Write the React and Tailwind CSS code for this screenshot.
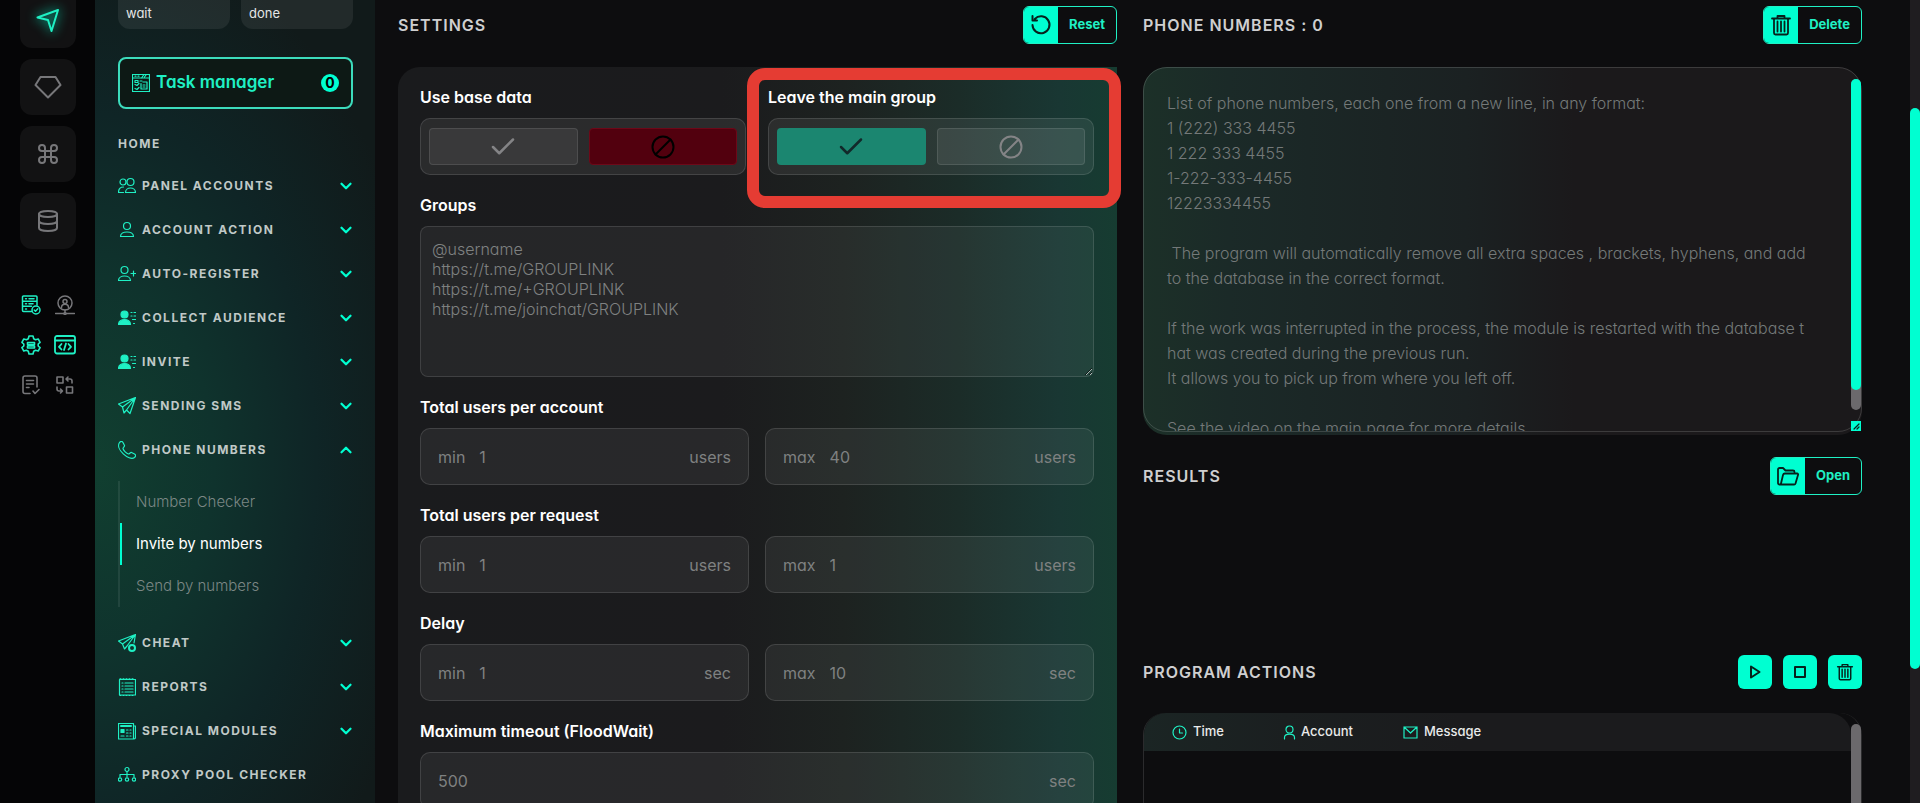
import React from 'react';
import { Check, ChevronDown, ChevronUp, Command, Database } from 'lucide-react';

const Svg = ({ children, size = 18, box = 18, width = 1.2, className = '' }) => (
  <svg
    width={size}
    height={size}
    viewBox={`0 0 ${box} ${box}`}
    fill="none"
    stroke="currentColor"
    strokeWidth={width}
    strokeLinecap="round"
    strokeLinejoin="round"
    className={`shrink-0 ${className}`}
    aria-hidden="true"
  >
    {children}
  </svg>
);

/* Rail icons */
const NavArrow = () => (
  <Svg size={24} box={24} width={2} className="drop-shadow-[0_0_6px_#00ffd1]">
    <path d="M22 2 1.5 9.5 12 12l3.500 11Z" />
  </Svg>
);

const Diamond = () => (
  <Svg size={28} box={28} width={2}>
    <path d="M6.500 4h15L26.500 12 14 24.500 1.500 12Z" />
  </Svg>
);

const ServerCheck = () => (
  <Svg size={20} box={20} width={1.5}>
    <path d="M10.500 16.500H2.500a1 1 0 0 1-1-1V2a1 1 0 0 1 1-1H15a1 1 0 0 1 1 1v8M1.500 6.200H16M1.500 11.200h9M4.500 3.700h1M8 3.700h5M4.500 8.700h1M8 8.700h4M4.500 14h1" />
    <circle cx="15" cy="15" r="4" />
    <path d="m13.200 15 1.300 1.300 2.300-2.500" />
  </Svg>
);

const UserNetwork = () => (
  <Svg size={20} box={20} width={1.5}>
    <circle cx="10" cy="8" r="7" />
    <circle cx="10" cy="6.500" r="2" />
    <path d="M6.500 12.500c0-4.500 7-4.500 7 0M10 15v2M.500 18.500h8M11.500 18.500h8" />
    <circle cx="10" cy="18.500" r="1" />
  </Svg>
);

const GearServer = () => (
  <Svg size={20} box={20} width={1.6}>
    <path d="M8 1h4l.700 2.700 1.800 1 2.700-.700 1.900 3.300L17.200 9v2l1.900 1.700-1.900 3.300-2.700-.700-1.800 1L12 19H8l-.700-2.700-1.800-1-2.700.700-1.900-3.300L2.800 11V9L.900 7.300 2.800 4l2.700.700 1.800-1Z" />
    <path d="M6.500 7.500h7v2h-7zM6.500 11h7v2h-7z" />
  </Svg>
);

const CodeWindow = () => (
  <Svg size={22} box={22} width={1.8}>
    <rect x="1" y="2" width="20" height="17.500" rx="2" />
    <path d="M1 6.500h20M7.500 10 5 12.800l2.500 2.700M14.500 10l2.500 2.800-2.500 2.700M12 9.500l-2 6.500" />
  </Svg>
);

const DocCheck = () => (
  <Svg size={20} box={20} width={1.6}>
    <path d="M9 18.500H4a2 2 0 0 1-2-2V3a2 2 0 0 1 2-2h10a2 2 0 0 1 2 2v9M5.500 5.500h7M5.500 9h7M5.500 12.500H8M12 16l2 2.500 4-4" />
  </Svg>
);

const Swap = () => (
  <Svg size={20} box={20} width={1.6}>
    <path d="M2 2h6v6H2zM11.500 12h6v6h-6zM11.500 4H15a2 2 0 0 1 2 2v2M13 2l-2 2 2 2M2 12v2a2 2 0 0 0 2 2h3M5.500 14l2 2-2 2" />
  </Svg>
);

/* Menu icons */
const TaskIcon = () => (
  <Svg>
    <path d="M.500.500h17v17H.500zM.500 4h17M3 2.200h1M6 2.200h1M9.500 4 12 .500M12.500 3 14 1M3 6.500h3v2H3zM3 10.500l2 1 2-2M3 14.500l2 1 2-2M8 7h2M9 9.500V15h6V8h-4M11 11h2M11 13h2" />
  </Svg>
);

const UsersIcon = () => (
  <Svg>
    <circle cx="5" cy="5" r="3" />
    <circle cx="12.500" cy="5" r="3.500" />
    <path d="M.500 15.500c0-4 2-5.500 5-5.500M.500 15.500h5M7.500 15.500c0-6 10-6 10 0Z" />
  </Svg>
);

const UserIcon = () => (
  <Svg>
    <circle cx="9" cy="5" r="3.500" />
    <path d="M2.500 15.500c0-6 13-6 13 0Z" />
  </Svg>
);

const UserPlusIcon = () => (
  <Svg>
    <circle cx="6.500" cy="5" r="3.500" />
    <path d="M.500 15.500c0-6 12-6 12 0ZM15.500 6v5M13 8.500h5" />
  </Svg>
);

const AudienceIcon = () => (
  <Svg>
    <circle cx="6.500" cy="5.500" r="3.500" fill="currentColor" />
    <path d="M.500 15.500c0-6.500 12-6.500 12 0Z" fill="currentColor" />
    <path d="M13 3.500h1M16 3.500h2M13 7h1M16 7h2M14.500 10.500h3M15.500 14.500h1" />
  </Svg>
);

const SendIcon = () => (
  <Svg>
    <path d="M17.500.500.500 7l4 3 1.500 6 2.500-3 3.500 3.500ZM17.500.500 4.500 10M17.500.500 8.500 13" />
  </Svg>
);

const PhoneIcon = () => (
  <Svg>
    <path d="M1.500 1.500C3-.200 4 0 5 1.500l1.500 3c.500 1-1.500 2-1.500 3C5.500 9.500 8.500 12.500 10.500 13c1 0 2-2 3-1.500l3 1.500c1.500 1 1.500 2 0 3.500C11 20.500-3 8 1.500 1.500Z" />
  </Svg>
);

const CheatIcon = () => (
  <Svg>
    <path d="M17.500.500.500 7l4 3 2 5 2.500-3M17.500.500 4.500 10M17.500.500 9 12M17.500.500 16 9" />
    <circle cx="14" cy="14" r="3" strokeWidth="2" />
  </Svg>
);

const ReportIcon = () => (
  <Svg>
    <path d="M1.500 1.500h16v15.500h-16z" />
    <path d="M2 .800h15M2 17.500h15" strokeDasharray="1 2" />
    <path d="M4 5h1M7 5h8M4 8h1M7 8h8M4 11h1M7 11h8M4 14h1M7 14h8" />
  </Svg>
);

const ModuleIcon = () => (
  <Svg>
    <path d="M.500 1.500h15v15.500H.500zM15.500 4h2v11.500c0 1-1 1.500-2 1.500" />
    <path d="M3 4h10" strokeWidth="2" />
    <path d="M3 7.500h3v3H3z" fill="currentColor" />
    <path d="M8.500 8h1.500M12 8h1M8.500 11h1.500M12 11h1M3 14h3M8.500 14h1.500M12 14h1" />
  </Svg>
);

const TreeIcon = () => (
  <Svg>
    <path d="M9 5.500v3M2 11V8.500h14V11M9 8.500V11" />
    <circle cx="9" cy="3.500" r="2" />
    <circle cx="2" cy="13.500" r="1.700" />
    <circle cx="9" cy="13.500" r="1.700" />
    <circle cx="16" cy="13.500" r="1.700" />
  </Svg>
);

/* Action icons */
const ResetIcon = () => (
  <Svg size={22} box={22} width={2}>
    <path d="M2.500 11a8.500 8.500 0 1 0 2.300-6M2.500 2v4.500H7" />
  </Svg>
);

const TrashIcon = ({ size = 22 }) => (
  <Svg size={size} box={22} width={1.8}>
    <path d="M2 4.500h18M7.500 4V2h7v2M4 5v14a1.500 1.500 0 0 0 1.500 1.500h11A1.500 1.500 0 0 0 18 19V5M7.500 7.500v10M11 7.500v10M14.500 7.500v10" />
  </Svg>
);

const FolderIcon = () => (
  <Svg size={22} box={22} width={1.8}>
    <path d="M2.500 19.500a1.500 1.500 0 0 1-1.500-1.500V4.500A1.500 1.500 0 0 1 2.500 3H6l2.500 2.500H16A1.500 1.500 0 0 1 17.500 7M2.500 19.500H17a1.500 1.500 0 0 0 1.500-1l2.500-8.500a1 1 0 0 0-1-1.500H8a2 2 0 0 0-2 1.500L4 18.500a2 2 0 0 1-1.500 1Z" />
  </Svg>
);

const BlockIcon = () => (
  <Svg size={24} box={24} width={2}>
    <circle cx="12" cy="12" r="10.500" />
    <path d="M4.500 19.500 19.500 4.500" />
  </Svg>
);

const menuTop = [
  { label: 'PANEL ACCOUNTS', icon: UsersIcon },
  { label: 'ACCOUNT ACTION', icon: UserIcon },
  { label: 'AUTO-REGISTER', icon: UserPlusIcon },
  { label: 'COLLECT AUDIENCE', icon: AudienceIcon },
  { label: 'INVITE', icon: AudienceIcon },
  { label: 'SENDING SMS', icon: SendIcon },
  { label: 'PHONE NUMBERS', icon: PhoneIcon, open: true },
];

const menuBottom = [
  { label: 'CHEAT', icon: CheatIcon },
  { label: 'REPORTS', icon: ReportIcon },
  { label: 'SPECIAL MODULES', icon: ModuleIcon },
  { label: 'PROXY POOL CHECKER', icon: TreeIcon, single: true },
];

const phonePlaceholder = `List of phone numbers, each one from a new line, in any format:
1 (222) 333 4455
1 222 333 4455
1-222-333-4455
12223334455

 The program will automatically remove all extra spaces , brackets, hyphens, and add
to the database in the correct format.

If the work was interrupted in the process, the module is restarted with the database t
hat was created during the previous run.
It allows you to pick up from where you left off.

See the video on the main page for more details`;

const groupsPlaceholder = `@username
https://t.me/GROUPLINK
https://t.me/+GROUPLINK
https://t.me/joinchat/GROUPLINK`;

const MenuItem = ({ item }) => {
  const Icon = item.icon;
  const Arrow = item.open ? ChevronUp : ChevronDown;
  return (
    <button className="flex h-11 w-full items-center gap-1.5 text-xs font-bold tracking-[1.5px] text-[#c0c9c7]">
      <span className="text-[#1ff0c4]"><Icon /></span>
      <span>{item.label}</span>
      {!item.single && <Arrow size={18} strokeWidth={3} className="-mr-0.5 ml-auto text-[#00ffd1]" />}
    </button>
  );
};

const Rail = () => (
  <aside className="flex w-[95px] shrink-0 flex-col items-center bg-[#050506] text-[#77777a]">
    <div className="flex flex-col gap-[11px]">
      <button aria-label="Telegram" className="flex h-12 w-14 items-center justify-center rounded-b-xl bg-[#121213] pb-2 text-[#1ff0c4]">
        <NavArrow />
      </button>
      <button aria-label="Premium" className="flex h-14 w-14 items-center justify-center rounded-xl bg-[#121213]"><Diamond /></button>
      <button aria-label="Commands" className="flex h-14 w-14 items-center justify-center rounded-xl bg-[#121213]"><Command size={24} /></button>
      <button aria-label="Database" className="flex h-14 w-14 items-center justify-center rounded-xl bg-[#121213]"><Database size={24} /></button>
    </div>
    <div className="mt-[46px] grid grid-cols-2 place-items-center gap-x-3 gap-y-[19px]">
      <button aria-label="Servers" className="text-[#1ff0c4]"><ServerCheck /></button>
      <button aria-label="Proxy"><UserNetwork /></button>
      <button aria-label="Settings" className="text-[#1ff0c4]"><GearServer /></button>
      <button aria-label="Code" className="text-[#1ff0c4]"><CodeWindow /></button>
      <button aria-label="Logs"><DocCheck /></button>
      <button aria-label="Convert"><Swap /></button>
    </div>
  </aside>
);

const Sidebar = () => (
  <nav className="w-[280px] shrink-0 bg-[radial-gradient(ellipse_340px_540px_at_0%_58%,#113f30_0%,#0f332d_35%,#0f2526_65%,#111a1a_100%)] pl-[23px] pr-[22px]">
    <div className="grid grid-cols-2 gap-[11px] text-[13px] leading-[26px] text-[#e4e6e6]">
      <div className="h-[29px] rounded-b-xl bg-white/7 px-2">wait</div>
      <div className="h-[29px] rounded-b-xl bg-white/7 px-2">done</div>
    </div>
    <button className="mt-7 flex h-[52px] w-full items-center gap-1.5 rounded-lg border-2 border-[#3cdcbc] bg-[#0d1915] px-3 text-[17px] font-semibold text-[#1ff0c4]">
      <TaskIcon />
      <span>Task manager</span>
      <span className="ml-auto flex h-[18px] w-[18px] items-center justify-center rounded-full bg-[#00ffd1] text-sm font-bold text-black">0</span>
    </button>
    <a href="#home" className="mt-[15px] flex h-10 items-center text-xs font-bold tracking-[1.5px] text-[#c0c9c7]">HOME</a>
    {menuTop.map((item) => <MenuItem key={item.label} item={item} />)}
    <div className="mt-[9px] flex flex-col border-l-2 border-white/8 text-[15px] font-light text-[#7c8785]">
      <a href="#checker" className="flex h-[42px] items-center pl-4">Number Checker</a>
      <a href="#invite" className="flex h-[42px] items-center border-l-2 border-[#00ffd1] pl-3.5 font-normal text-white">Invite by numbers</a>
      <a href="#send" className="flex h-[42px] items-center pl-4">Send by numbers</a>
    </div>
    <div className="mt-3.5">
      {menuBottom.map((item) => <MenuItem key={item.label} item={item} />)}
    </div>
  </nav>
);

const SectionHeader = ({ title, children }) => (
  <div className="flex h-[50px] items-center justify-between">
    <h2 className="text-base font-semibold tracking-[1px] text-[#cfcfd0]">{title}</h2>
    {children}
  </div>
);

const ActionButton = ({ icon: Icon, label }) => (
  <button className="flex h-[38px] items-stretch overflow-hidden rounded-md border border-[#1ff0c4] text-[13px] font-bold text-[#1ff0c4]">
    <span className="flex w-[34px] items-center justify-center bg-[#00ffd1] text-[#06221c]"><Icon /></span>
    <span className="flex items-center px-[11px]">{label}</span>
  </button>
);

const Toggle = ({ label, on, highlight }) => (
  <div className="relative" role="group" aria-label={label}>
    <p className="text-base font-semibold leading-6 text-white">{label}</p>
    <div className="mt-[9px] grid h-[57px] grid-cols-2 gap-[11px] rounded-[10px] border border-white/12 bg-white/7 px-2 py-[9px]">
      <button
        aria-label="Yes"
        aria-pressed={!!on}
        className={`flex items-center justify-center rounded ${on ? 'bg-[#1b8670] text-[#12292a]' : 'border border-white/10 bg-white/7 text-[#848486]'}`}
      >
        <Check size={30} strokeWidth={2} />
      </button>
      <button
        aria-label="No"
        aria-pressed={!on}
        className={`flex items-center justify-center rounded ${on ? 'border border-white/10 bg-white/8 text-[#848486]' : 'border border-[#6d0818] bg-[#52000e] text-black'}`}
      >
        <BlockIcon />
      </button>
    </div>
    {highlight && (
      <div className="pointer-events-none absolute -bottom-[33px] -left-[21px] -right-[27px] -top-[17px] rounded-[18px] border-[12px] border-[#e53c33]" />
    )}
  </div>
);

const Field = ({ id, prefix, value, unit }) => (
  <label htmlFor={id} className="flex h-[57px] items-center gap-3.5 rounded-[10px] border border-white/12 bg-white/6 px-[17px] text-base text-[#7f8181]">
    {prefix && <span>{prefix}</span>}
    <input id={id} placeholder={value} className="min-w-0 flex-1 bg-transparent outline-none placeholder:text-[#7f8181]" />
    <span>{unit}</span>
  </label>
);

const RangeRow = ({ id, title, min, max, unit }) => (
  <div>
    <p className="text-base font-semibold leading-6 text-white">{title}</p>
    <div className="mt-[9px] grid grid-cols-2 gap-4">
      <Field id={`${id}-min`} prefix="min" value={min} unit={unit} />
      <Field id={`${id}-max`} prefix="max" value={max} unit={unit} />
    </div>
  </div>
);

const Settings = () => (
  <section className="flex min-w-0 flex-col">
    <SectionHeader title="SETTINGS">
      <ActionButton icon={ResetIcon} label="Reset" />
    </SectionHeader>
    <div className="mt-[17px] flex flex-1 flex-col gap-[18px] rounded-tl-[22px] bg-[linear-gradient(90deg,#1a1b1d_0%,#1b1b1d_45%,#1d2220_62%,#1b2c28_78%,#193733_92%,#163c31_100%)] pl-[22px] pr-[23px] pt-[18px]">
      <div className="grid grid-cols-2 gap-[22px]">
        <Toggle label="Use base data" />
        <Toggle label="Leave the main group" on highlight />
      </div>
      <div>
        <label htmlFor="groups" className="block text-base font-semibold leading-6 text-white">Groups</label>
        <textarea
          id="groups"
          placeholder={groupsPlaceholder}
          className="mt-[9px] block h-[151px] w-full rounded-lg border border-white/12 bg-white/5 px-[11px] py-3 text-base font-light leading-5 outline-none placeholder:text-[#7f8181]"
        />
      </div>
      <RangeRow id="account" title="Total users per account" min="1" max="40" unit="users" />
      <RangeRow id="request" title="Total users per request" min="1" max="1" unit="users" />
      <RangeRow id="delay" title="Delay" min="1" max="10" unit="sec" />
      <div>
        <p className="text-base font-semibold leading-6 text-white">Maximum timeout (FloodWait)</p>
        <div className="mt-[9px]">
          <Field id="timeout" value="500" unit="sec" />
        </div>
      </div>
    </div>
  </section>
);

const PhoneNumbers = () => (
  <div>
    <SectionHeader title="PHONE NUMBERS : 0">
      <ActionButton icon={TrashIcon} label="Delete" />
    </SectionHeader>
    <div className="relative mt-[17px] rounded-3xl bg-[linear-gradient(90deg,#1c3028_0%,#1b2a28_12%,#1b2122_45%,#1b191b_60%,#1b191b_100%)] pb-[3px]">
      <textarea
        aria-label="Phone numbers"
        placeholder={phonePlaceholder}
        className="block h-[365px] w-full resize-none overflow-hidden whitespace-pre rounded-3xl border border-white/15 px-[23px] pt-[23px] text-base font-light leading-[25px] outline-none placeholder:text-[#747979]"
      />
      <div className="absolute bottom-[25px] right-px top-3 w-2.5 rounded-full bg-[#6b696c]">
        <div className="h-[94%] rounded-full bg-[#00ffd1]" />
      </div>
      <div className="absolute bottom-1 right-px flex h-2.5 w-2.5 items-center justify-center bg-[#00ffd1] text-[#06221c]">
        <Svg size={8} box={8}><path d="M2 7 7 2M5 7l2-2" /></Svg>
      </div>
    </div>
  </div>
);

const ProgramActions = () => (
  <div className="mt-[146px] flex flex-1 flex-col">
    <SectionHeader title="PROGRAM ACTIONS">
      <div className="flex gap-[11px] text-[#06221c]">
        <button aria-label="Start" className="flex h-[34px] w-[34px] items-center justify-center rounded-md bg-[#00ffd1]">
          <Svg size={16} box={16} width={2}><path d="M4 2.500 12.500 8 4 13.500Z" /></Svg>
        </button>
        <button aria-label="Stop" className="flex h-[34px] w-[34px] items-center justify-center rounded-md bg-[#00ffd1]">
          <Svg size={14} box={14} width={2}><path d="M2 2h10v10H2z" /></Svg>
        </button>
        <button aria-label="Clear" className="flex h-[34px] w-[34px] items-center justify-center rounded-md bg-[#00ffd1]">
          <TrashIcon size={18} />
        </button>
      </div>
    </SectionHeader>
    <div className="relative mt-4 flex-1 rounded-t-[22px] border-x border-[#2b2b2d]">
      <table className="mr-2.5 block overflow-hidden rounded-t-[22px] bg-[linear-gradient(90deg,#1b2524_0%,#1b1f20_20%,#1b1b1d_45%)]">
        <thead className="block">
          <tr className="flex h-[38px] items-center pl-7 text-[13px] text-[#e9eaea]">
            <th className="flex w-[110px] items-center gap-1.5 font-medium">
              <Svg size={15} box={15} className="text-[#1ff0c4]"><circle cx="7.500" cy="7.500" r="6.500" /><path d="M7.500 4v4h3" /></Svg>
              Time
            </th>
            <th className="flex w-[121px] items-center gap-1 font-medium">
              <Svg size={15} box={15} className="text-[#1ff0c4]"><circle cx="7.500" cy="4.500" r="3.500" /><path d="M2.500 14v-1.500c0-4.500 10-4.500 10 0V14" /></Svg>
              Account
            </th>
            <th className="flex items-center gap-1.5 font-medium">
              <Svg size={15} box={15} className="text-[#1ff0c4]"><path d="M1 2h13v11H1zM1 2l6.500 6L14 2" /></Svg>
              Message
            </th>
          </tr>
        </thead>
      </table>
      <div className="absolute bottom-0 right-0 top-[11px] w-2.5 rounded-t-full bg-[#6b696c]" />
    </div>
  </div>
);

const App = () => {
  return (
    <div className="flex h-screen overflow-hidden bg-[#0d0d0f] font-['Inter',sans-serif] [font-feature-settings:'cv11']">
      <Rail />
      <Sidebar />
      <main className="grid min-w-0 flex-1 grid-cols-2 gap-[26px] pl-[23px] pr-12">
        <Settings />
        <section className="flex min-w-0 flex-col">
          <PhoneNumbers />
          <div className="mt-4">
            <SectionHeader title="RESULTS">
              <ActionButton icon={FolderIcon} label="Open" />
            </SectionHeader>
          </div>
          <ProgramActions />
        </section>
      </main>
      {/* Page scroll track */}
      <div className="w-2.5 shrink-0 bg-[#1f1d20] pt-[108px]">
        <div className="h-[561px] rounded-full bg-[#00ffd1]" />
      </div>
    </div>
  );
};

export default App;
